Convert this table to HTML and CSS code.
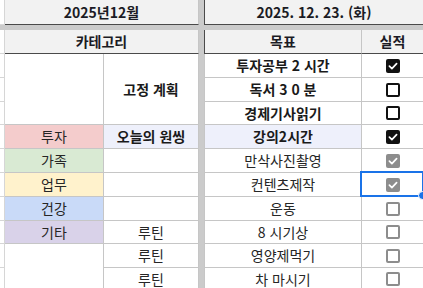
FILE: index.html
```html
<!DOCTYPE html>
<html lang="ko">
<head>
<meta charset="utf-8">
<title>2025년12월</title>
<link rel="stylesheet" href="styles.css">
</head>
<body>
<div class="sheet">
  <div class="divider"></div>
  <div class="band"></div>

  <div class="strip"></div>
  <div class="cell hdr h1a">2025년12월</div>
  <div class="cell hdr h1b">2025. 12. 23. (화)</div>

  <div class="strip"></div>
  <div class="cell hdr h2a">카테고리</div>
  <div class="cell hdr h2c">목표</div>
  <div class="cell hdr h2d">실적</div>

  <div class="strip"></div>
  <div class="cell cat span3"></div>
  <div class="cell plan span3 bold">고정 계획</div>
  <div class="cell goal bold">투자공부 2 시간</div>
  <div class="cell chk"><span class="cb on"><svg viewBox="0 0 14 14"><polyline points="3.4,7.2 5.9,9.7 10.6,4.6"/></svg></span></div>

  <div class="strip"></div>
  <div class="cell goal bold">독서 3 0 분</div>
  <div class="cell chk"><span class="cb"></span></div>

  <div class="strip"></div>
  <div class="cell goal bold">경제기사읽기</div>
  <div class="cell chk"><span class="cb"></span></div>

  <div class="strip"></div>
  <div class="cell cat pink">투자</div>
  <div class="cell plan lav bold">오늘의 원씽</div>
  <div class="cell goal lav bold">강의2시간</div>
  <div class="cell chk"><span class="cb on"><svg viewBox="0 0 14 14"><polyline points="3.4,7.2 5.9,9.7 10.6,4.6"/></svg></span></div>

  <div class="strip"></div>
  <div class="cell cat green">가족</div>
  <div class="cell plan"></div>
  <div class="cell goal">만삭사진촬영</div>
  <div class="cell chk"><span class="cb on gray"><svg viewBox="0 0 14 14"><polyline points="3.4,7.2 5.9,9.7 10.6,4.6"/></svg></span></div>

  <div class="strip"></div>
  <div class="cell cat yellow">업무</div>
  <div class="cell plan"></div>
  <div class="cell goal">컨텐츠제작</div>
  <div class="cell chk sel"><span class="cb on gray"><svg viewBox="0 0 14 14"><polyline points="3.4,7.2 5.9,9.7 10.6,4.6"/></svg></span></div>

  <div class="strip"></div>
  <div class="cell cat blue">건강</div>
  <div class="cell plan"></div>
  <div class="cell goal">운동</div>
  <div class="cell chk"><span class="cb gray"></span></div>

  <div class="strip"></div>
  <div class="cell cat purple">기타</div>
  <div class="cell plan">루틴</div>
  <div class="cell goal">8 시기상</div>
  <div class="cell chk"><span class="cb gray"></span></div>

  <div class="strip"></div>
  <div class="cell cat span2"></div>
  <div class="cell plan">루틴</div>
  <div class="cell goal">영양제먹기</div>
  <div class="cell chk"><span class="cb gray"></span></div>

  <div class="strip"></div>
  <div class="cell plan">루틴</div>
  <div class="cell goal">차 마시기</div>
  <div class="cell chk"><span class="cb gray"></span></div>
</div>
</body>
</html>
```
FILE: styles.css
```css
* { box-sizing: border-box; }
html, body {
  margin: 0;
  padding: 0;
  background: #ffffff;
  overflow: hidden;
}
body {
  width: 423px;
  height: 288px;
  font-family: "Noto Sans CJK KR", "Noto Sans", sans-serif;
  font-size: 14px;
  color: #262626;
}
.sheet {
  display: grid;
  grid-template-columns: 5px 99px 95px 5px 158px 62px;
  grid-template-rows: 25px 5px 24px 24px 24px 23px 24px 24px 24px 24px 23px 24px 23px;
}
.divider {
  grid-column: 4;
  grid-row: 1 / -1;
  background: #cbcbcb;
}
.band {
  grid-column: 1 / -1;
  grid-row: 2;
  background: #cbcbcb;
}
.strip {
  border-right: 1px solid #d6d6d6;
  border-bottom: 1px solid #d6d6d6;
}
.cell {
  display: flex;
  align-items: center;
  justify-content: center;
  border-right: 1px solid #c6c6c6;
  border-bottom: 1px solid #c6c6c6;
  white-space: nowrap;
  line-height: 1;
  padding-bottom: 1px;
}
.hdr {
  background: #f2f2f2;
  font-weight: bold;
  font-size: 14px;
  color: #1b1b24;
  border-bottom: 1px solid #4a4a4a;
}
.h1a, .h2a { grid-column: span 2; }
.h1b { grid-column: span 2; border-left: 1px solid #4a4a4a; }
.h2c { border-left: 1px solid #4a4a4a; }
.bold { font-weight: bold; color: #1a1a1a; }
.goal { border-left: 1px solid #c6c6c6; }
.span3 { grid-row: span 3; }
.span2 { grid-row: span 2; }
.pink { background: #f4cccc; }
.green { background: #d9ead3; }
.yellow { background: #fff2cc; }
.blue { background: #c9daf8; }
.purple { background: #d9d2e9; }
.lav { background: #eef0fb; }
.chk { position: relative; padding-bottom: 0; padding-left: 1px; }
.cb {
  display: block;
  width: 14px;
  height: 14px;
  border: 2px solid #111111;
  border-radius: 2px;
  background: #ffffff;
}
.cb.gray { border-color: #8d8d8d; }
.cb.on { background: #111111; border: none; }
.cb.on.gray { background: #8d8d8d; }
.cb svg {
  display: block;
  width: 14px;
  height: 14px;
  fill: none;
  stroke: #ffffff;
  stroke-width: 1.7;
  stroke-linecap: round;
  stroke-linejoin: round;
}
.sel::after {
  content: "";
  position: absolute;
  left: -2px;
  top: -2px;
  right: -1px;
  bottom: -1px;
  border: 2px solid #1a73e8;
  pointer-events: none;
}
.sel::before {
  content: "";
  position: absolute;
  right: -4px;
  bottom: -4px;
  width: 7px;
  height: 7px;
  border-radius: 50%;
  background: #1a73e8;
  border: 1px solid #ffffff;
  z-index: 2;
}
```
